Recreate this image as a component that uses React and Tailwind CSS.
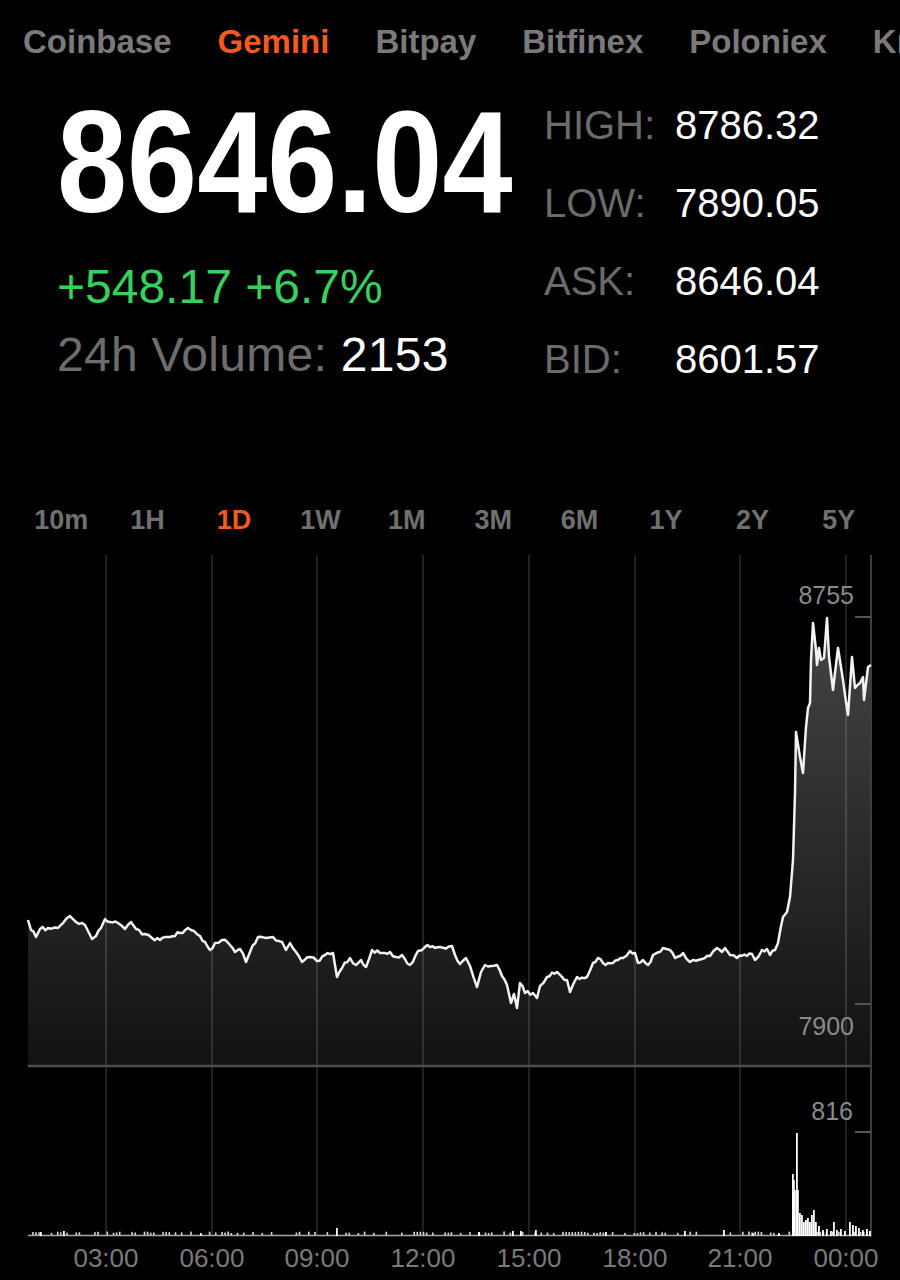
import React from 'react';

const exchanges = ['Coinbase', 'Gemini', 'Bitpay', 'Bitfinex', 'Poloniex', 'Kraken'];
const periods = ['10m', '1H', '1D', '1W', '1M', '3M', '6M', '1Y', '2Y', '5Y'];
const stats = [
  ['HIGH:', '8786.32'],
  ['LOW:', '7890.05'],
  ['ASK:', '8646.04'],
  ['BID:', '8601.57'],
];
const gridX = [106, 212, 317, 423, 529, 635, 740, 846];
const times = ['03:00', '06:00', '09:00', '12:00', '15:00', '18:00', '21:00', '00:00'];

// page coords for the 1D price trace
const anchors = [
  [28, 920], [31, 930], [36, 937], [40, 929], [48, 928], [58, 928], [63, 923], [70, 916], [76, 922],
  [85, 925], [89, 933], [92, 939], [96, 936], [101, 928], [105, 919], [110, 922], [118, 923], [125, 929],
  [131, 922], [136, 929], [145, 934], [152, 938], [160, 940], [170, 937], [180, 933], [188, 928], [194, 931],
  [200, 936], [205, 942], [210, 950], [215, 943], [222, 940], [230, 945], [235, 952], [240, 949], [246, 962],
  [250, 952], [258, 937], [266, 938], [273, 937], [282, 942], [286, 950], [290, 943], [296, 952], [302, 962],
  [310, 957], [317, 961], [325, 955], [333, 953], [337, 977], [342, 968], [350, 958], [356, 965], [361, 960],
  [366, 967], [372, 950], [380, 953], [390, 952], [396, 957], [402, 955], [410, 965], [418, 951], [425, 947],
  [440, 947], [452, 946], [455, 955], [460, 964], [466, 958], [470, 966], [477, 987], [481, 972], [485, 965],
  [491, 966], [497, 965], [502, 976], [507, 985], [511, 1003], [514, 994], [517, 1008], [520, 983], [525, 993],
  [533, 993], [537, 998], [540, 986], [547, 977], [557, 972], [567, 980], [570, 992], [577, 977], [587, 977],
  [593, 963], [598, 958], [603, 963], [613, 963], [623, 958], [630, 951], [635, 953], [638, 963], [643, 960],
  [648, 965], [653, 955], [663, 948], [670, 950], [675, 958], [683, 953], [690, 962], [702, 959], [710, 956],
  [717, 948], [722, 952], [725, 948], [730, 955], [737, 958], [747, 956], [752, 954], [755, 960], [762, 950],
  [767, 949], [770, 955], [775, 950], [778, 943], [783, 917], [787, 912], [790, 897], [793, 860], [795, 793],
  [796, 732], [800, 757], [803, 773], [806, 727], [808, 708], [810, 703], [811, 660], [813, 623], [816, 650],
  [817, 665], [819, 648], [821, 660], [824, 658], [827, 618], [829, 657], [833, 690], [838, 648], [843, 680],
  [848, 715], [852, 657], [855, 688], [860, 683], [863, 677], [864, 700], [868, 667], [871, 665],
];

const volumeSpikes = [
  [40, 1232], [63, 1231], [200, 1233], [336, 1228], [478, 1232], [512, 1231], [520, 1231], [535, 1230],
  [605, 1232], [684, 1231], [723, 1230], [752, 1233], [778, 1233],
  [792, 1174], [793, 1180], [794, 1190], [796, 1133], [797, 1190], [799, 1213], [801, 1215], [803, 1222],
  [805, 1220], [807, 1218], [809, 1222], [811, 1215], [813, 1210], [815, 1222], [818, 1226], [822, 1230],
  [826, 1229], [830, 1231], [833, 1222], [836, 1230], [840, 1229], [844, 1231], [849, 1222], [852, 1225],
  [855, 1226], [858, 1228], [862, 1230], [866, 1229], [869, 1231],
];

function mulberry32(a) {
  return function () {
    a |= 0;
    a = (a + 0x6d2b79f5) | 0;
    let t = Math.imul(a ^ (a >>> 15), 1 | a);
    t = (t + Math.imul(t ^ (t >>> 7), 61 | t)) ^ t;
    return ((t ^ (t >>> 14)) >>> 0) / 4294967296;
  };
}

const rand = mulberry32(7);
const pts = [];
for (let i = 0; i < anchors.length - 1; i++) {
  const [x0, y0] = anchors[i];
  const [x1, y1] = anchors[i + 1];
  pts.push([x0, y0]);
  const dx = x1 - x0;
  if (dx >= 5) {
    const n = Math.floor(dx / 2.5);
    for (let k = 1; k < n; k++) {
      const t = k / n;
      pts.push([x0 + dx * t, y0 + (y1 - y0) * t + (rand() - 0.5) * 4]);
    }
  }
}
pts.push(anchors[anchors.length - 1]);
const lineD = 'M' + pts.map((p) => p[0].toFixed(1) + ',' + p[1].toFixed(1)).join('L');
const fillD = lineD + 'L871,1066L28,1066Z';

const specks = [];
for (let x = 29; x < 870; x += 3.1) if (rand() > 0.6) specks.push([x, 2 + rand() * 1.5]);

function Chart() {
  return (
    <svg width="900" height="725" viewBox="0 555 900 725" className="block">
      <defs>
        <linearGradient id="pfill" gradientUnits="userSpaceOnUse" x1="0" y1="600" x2="0" y2="1066">
          <stop offset="0" stopColor="#464646" />
          <stop offset="1" stopColor="#121212" />
        </linearGradient>
      </defs>
      <path d={fillD} fill="url(#pfill)" />
      {gridX.map((x) => (
        <line key={x} x1={x} y1="555" x2={x} y2="1236" stroke="rgba(255,255,255,0.17)" strokeWidth="1.5" />
      ))}
      <line x1="871" y1="555" x2="871" y2="1237" stroke="#3d3d3d" strokeWidth="2" />
      <line x1="28" y1="1066" x2="871" y2="1066" stroke="#4b4b52" strokeWidth="2.5" />
      <line x1="855" y1="617" x2="871" y2="617" stroke="#555" strokeWidth="2" />
      <line x1="855" y1="1004" x2="871" y2="1004" stroke="#555" strokeWidth="2" />
      <line x1="855" y1="1132" x2="871" y2="1132" stroke="#555" strokeWidth="2" />
      <path d={lineD} fill="none" stroke="#f2f2f2" strokeWidth="2.5" strokeLinejoin="round" />

      <g fontFamily="Liberation Sans, Arial, sans-serif" fill="#8a8a8a" fontSize="25" textAnchor="end">
        <text x="854" y="604">8755</text>
        <text x="854" y="1035">7900</text>
        <text x="853" y="1120">816</text>
      </g>

      <line x1="28" y1="1235.5" x2="871" y2="1235.5" stroke="#a8a8a8" strokeWidth="1.5" />
      {specks.map(([x, h], i) => (
        <rect key={i} x={x} y={1235 - h} width="1.6" height={h} fill="#d8d8d8" />
      ))}
      {volumeSpikes.map(([x, y], i) => (
        <rect key={'v' + i} x={x} y={y} width="1.8" height={1236 - y} fill="#fff" />
      ))}

      <g fontFamily="Liberation Sans, Arial, sans-serif" fill="#7a7a7a" fontSize="26" textAnchor="middle">
        {times.map((t, i) => (
          <text key={t} x={gridX[i]} y="1267">{t}</text>
        ))}
      </g>
    </svg>
  );
}

export default function App() {
  return (
    <div className="w-[900px] h-[1280px] bg-black overflow-hidden font-['Liberation_Sans',Arial,sans-serif]">
      {/* Exchange tabs */}
      <div className="flex gap-[46px] pl-[23px] pt-[25px] text-[33px] font-bold leading-none whitespace-nowrap">
        {exchanges.map((e) => (
          <span key={e} className={`shrink-0 ${e === 'Gemini' ? 'text-[#f25a1f]' : 'text-[#7a7a7a]'}`}>{e}</span>
        ))}
      </div>

      {/* Quote */}
      <div className="flex">
        <div className="w-[544px] shrink-0 pl-[57px] pt-[33px]">
          <div className="text-[144px] font-bold leading-none text-white origin-left scale-x-[0.875] whitespace-nowrap">8646.04</div>
          <div className="mt-[28px] text-[48px] leading-none text-[#38d05c]">+548.17 +6.7%</div>
          <div className="mt-[20px] text-[48px] leading-none whitespace-nowrap tracking-[0.3px]">
            <span className="text-[#6d6d6d]">24h Volume:</span> <span className="text-white">2153</span>
          </div>
        </div>
        <div className="pt-[47px] flex flex-col gap-[38px]">
          {stats.map(([label, value]) => (
            <div key={label} className="flex text-[40px] leading-none">
              <span className="w-[131px] text-[#6b6b6b]">{label}</span>
              <span className="text-white">{value}</span>
            </div>
          ))}
        </div>
      </div>

      {/* Periods */}
      <div className="mt-[128px] ml-[18px] w-[864px] grid grid-cols-10 text-[27px] font-bold leading-none">
        {periods.map((p) => (
          <div key={p} className={`text-center ${p === '1D' ? 'text-[#f25a1f]' : 'text-[#707070]'}`}>{p}</div>
        ))}
      </div>

      <div className="mt-[21px]">
        <Chart />
      </div>
    </div>
  );
}
